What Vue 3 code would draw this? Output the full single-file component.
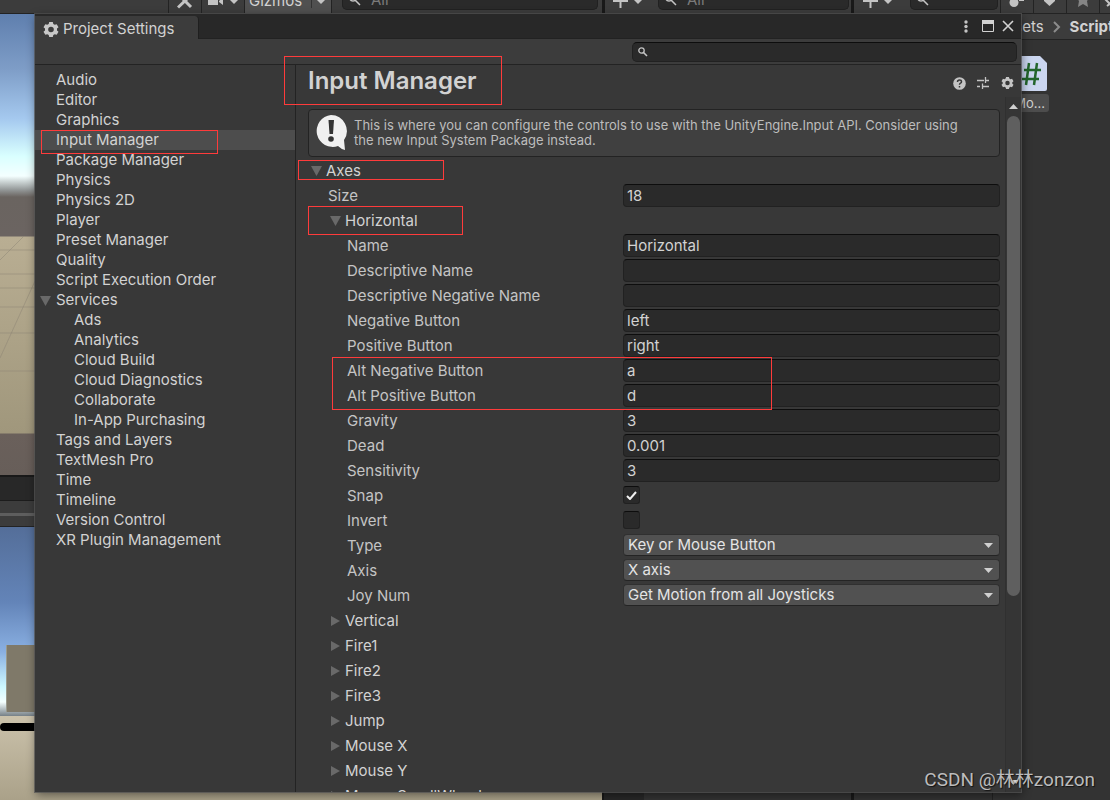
<script setup>
import { ref } from 'vue'

const sections = [
  { name: 'Audio' }, { name: 'Editor' }, { name: 'Graphics' },
  { name: 'Input Manager', active: true }, { name: 'Package Manager' },
  { name: 'Physics' }, { name: 'Physics 2D' }, { name: 'Player' },
  { name: 'Preset Manager' }, { name: 'Quality' }, { name: 'Script Execution Order' },
  { name: 'Services', open: true },
  { name: 'Ads', child: true }, { name: 'Analytics', child: true },
  { name: 'Cloud Build', child: true }, { name: 'Cloud Diagnostics', child: true },
  { name: 'Collaborate', child: true }, { name: 'In-App Purchasing', child: true },
  { name: 'Tags and Layers' }, { name: 'TextMesh Pro' }, { name: 'Time' },
  { name: 'Timeline' }, { name: 'Version Control' }, { name: 'XR Plugin Management' },
]

const fields = ref([
  { id: 'name', label: 'Name', kind: 'text', value: 'Horizontal' },
  { id: 'desc', label: 'Descriptive Name', kind: 'text', value: '' },
  { id: 'desc-neg', label: 'Descriptive Negative Name', kind: 'text', value: '' },
  { id: 'neg', label: 'Negative Button', kind: 'text', value: 'left' },
  { id: 'pos', label: 'Positive Button', kind: 'text', value: 'right' },
  { id: 'alt-neg', label: 'Alt Negative Button', kind: 'text', value: 'a' },
  { id: 'alt-pos', label: 'Alt Positive Button', kind: 'text', value: 'd' },
  { id: 'gravity', label: 'Gravity', kind: 'text', value: '3' },
  { id: 'dead', label: 'Dead', kind: 'text', value: '0.001' },
  { id: 'sensitivity', label: 'Sensitivity', kind: 'text', value: '3' },
  { id: 'snap', label: 'Snap', kind: 'check', value: true },
  { id: 'invert', label: 'Invert', kind: 'check', value: false },
  { id: 'type', label: 'Type', kind: 'select', value: 'Key or Mouse Button' },
  { id: 'axis', label: 'Axis', kind: 'select', value: 'X axis' },
  { id: 'joy', label: 'Joy Num', kind: 'select', value: 'Get Motion from all Joysticks' },
])
const size = ref('18')
const axes = ['Vertical', 'Fire1', 'Fire2', 'Fire3', 'Jump', 'Mouse X', 'Mouse Y', 'Mouse ScrollWheel']
const gear = 'M6.2 0h3.600l.5 2 1.400.8 2-.6 1.800 3-1.500 1.400v1.800l1.500 1.400-1.800 3-2-.6-1.400.8-.5 2H6.200l-.5-2-1.400-.8-2 .6-1.800-3L2 8.400V6.600L.5 5.200l1.800-3 2 .6L5.700 2zM8 4.700a2.800 2.800 0 1 0 0 5.600 2.800 2.800 0 0 0 0-5.600z'
</script>

<template>
  <div class="desktop">
    <header class="editor-bar">
      <button class="bar-cell tools" aria-label="Tools">
        <svg width="16" height="14" viewBox="0 0 16 14"><path d="M1 11.500 11 2M5 2l9 9" stroke="#c4c4c4" stroke-width="3" fill="none" /></svg>
      </button>
      <button class="bar-cell camera" aria-label="Camera">
        <svg width="32" height="14" viewBox="0 0 32 14"><path d="M1 0h10v9H1zM12 5l4-4v8l-4-3z" fill="#c4c4c4" /><path d="M23 4h8l-4 4z" fill="#c4c4c4" /></svg>
      </button>
      <button class="bar-cell gizmos"><span>Gizmos</span><i></i><svg width="8" height="4" viewBox="0 0 8 4"><path d="M0 0h8L4 4z" fill="#c4c4c4" /></svg></button>
      <label class="bar-search scene-search"><svg width="12" height="12" viewBox="0 0 12 12"><circle cx="4" cy="4" r="3" fill="none" stroke="#c4c4c4" stroke-width="1.500" /><path d="m6 6 5 5" stroke="#c4c4c4" stroke-width="1.500" /></svg><input aria-label="Search scene" placeholder="All" /></label>
      <i class="gutter"></i>
      <button class="bar-cell add" aria-label="Add object"><svg width="30" height="14" viewBox="0 0 30 14"><path d="M0 5h15M7.500 0v12" stroke="#c4c4c4" stroke-width="2" /><path d="M21 4h8l-4 4z" fill="#c4c4c4" /></svg></button>
      <label class="bar-search hierarchy-search"><svg width="12" height="12" viewBox="0 0 12 12"><circle cx="4" cy="4" r="3" fill="none" stroke="#c4c4c4" stroke-width="1.500" /><path d="m6 6 5 5" stroke="#c4c4c4" stroke-width="1.500" /></svg><input aria-label="Search hierarchy" placeholder="All" /></label>
      <i class="gutter"></i>
      <button class="bar-cell add add-asset" aria-label="Add asset"><svg width="30" height="14" viewBox="0 0 30 14"><path d="M0 5h15M7.500 0v12" stroke="#c4c4c4" stroke-width="2" /><path d="M21 4h8l-4 4z" fill="#c4c4c4" /></svg></button>
      <label class="bar-search asset-search"><svg width="12" height="12" viewBox="0 0 12 12"><circle cx="4" cy="4" r="3" fill="none" stroke="#c4c4c4" stroke-width="1.500" /><path d="m6 6 5 5" stroke="#c4c4c4" stroke-width="1.500" /></svg><input aria-label="Search assets" /></label>
      <button class="bar-cell filter" aria-label="Filter by type"><svg width="16" height="14" viewBox="0 0 16 14"><circle cx="5" cy="6.500" r="4.500" fill="#c4c4c4" /><path d="M10 1h5v4h-5z" fill="#c4c4c4" /></svg></button>
      <button class="bar-cell filter" aria-label="Filter by label"><svg width="14" height="14" viewBox="0 0 14 14"><path d="M1 0h11v5L6.500 10 1 5z" fill="#c4c4c4" /></svg></button>
      <button class="bar-cell filter" aria-label="Favorites"><svg width="14" height="14" viewBox="0 0 14 14"><path d="M0 1h14l-3 4 1 6-5-3-5 3 1-6z" fill="#858585" /></svg></button>
      <button class="bar-cell hidden-items" aria-label="Hidden items"><svg width="14" height="14" viewBox="0 0 14 14"><path d="m7 3 7 7M9 10l5-4" stroke="#c4c4c4" stroke-width="2" /></svg></button>
    </header>

    <div class="editor-body">
      <div class="viewports">
        <div class="scene-view">
          <svg width="35" height="197" viewBox="0 0 35 197"><path d="M0 14h35M0 38h35M0 52h35M0 71h35M0 97h35M0 135h35M0 24 24 0M0 122 35 45" fill="none" stroke="#8d8675" stroke-opacity=".5" /></svg>
        </div>
        <div class="game-tab"></div>
        <div class="game-tools"><i></i></div>
        <div class="game-view">
          <div class="game-sky"><i></i></div>
          <div class="game-ground"><i></i></div>
        </div>
      </div>
      <div class="hierarchy"></div>
      <div class="project">
        <div class="folders"></div>
        <div class="assets">
          <nav class="breadcrumb">
            <a href="#">Assets</a>
            <svg width="8" height="12" viewBox="0 0 8 12"><path d="m1 1 5 5-5 5" fill="none" stroke="#8c8c8c" stroke-width="2" /></svg>
            <b>Scripts</b>
          </nav>
          <figure class="asset">
            <svg width="42" height="35" viewBox="0 0 42 35"><path d="M2 0h33l7 7v26q0 2-2 2H2q-2 0-2-2V2q0-2 2-2z" fill="#cbd6f0" /><path d="M24 7 21 29M32 7l-3 22M19 14h17M17 23h17" stroke="#23652c" stroke-width="2.500" fill="none" /></svg>
            <figcaption>Mo...</figcaption>
          </figure>
        </div>
      </div>
    </div>

    <main class="window">
      <div class="titlebar">
        <div class="tab">
          <svg width="16" height="15" viewBox="0 0 16 15"><path :d="gear" fill="#c8c8c8" fill-rule="evenodd" /></svg>
          <span>Project Settings</span>
        </div>
        <div class="window-buttons">
          <button aria-label="Menu"><svg width="4" height="13" viewBox="0 0 4 13"><circle cx="2" cy="2" r="1.700" fill="#c4c4c4" /><circle cx="2" cy="6.500" r="1.700" fill="#c4c4c4" /><circle cx="2" cy="11" r="1.700" fill="#c4c4c4" /></svg></button>
          <button aria-label="Maximize"><svg width="12" height="12" viewBox="0 0 12 12"><path d="M.5.500h11v11H.500z" fill="none" stroke="#d2d2d2" /><path d="M0 0h12v4H0z" fill="#d2d2d2" /></svg></button>
          <button aria-label="Close"><svg width="12" height="12" viewBox="0 0 12 12"><path d="m1 1 10 10M11 1 1 11" stroke="#d2d2d2" stroke-width="1.600" /></svg></button>
        </div>
      </div>

      <div class="search-row">
        <label class="settings-search">
          <svg width="10" height="10" viewBox="0 0 10 10"><circle cx="3.500" cy="3.500" r="2.700" fill="none" stroke="#c4c4c4" stroke-width="1.300" /><path d="m5.500 5.500 3.500 3.500" stroke="#c4c4c4" stroke-width="1.600" /></svg>
          <input type="text" aria-label="Search settings" />
        </label>
      </div>

      <div class="columns">
        <nav class="sidebar">
          <a v-for="s in sections" :key="s.name" href="#" :class="{ active: s.active, child: s.child }">
            <svg v-if="s.open" class="fold" width="11" height="10" viewBox="0 0 11 10"><path d="M0 0h11L5.500 10z" fill="#696969" /></svg>{{ s.name }}
          </a>
        </nav>

        <section class="content">
          <div class="heading">
            <h1>Input Manager</h1>
            <div class="heading-buttons">
              <button aria-label="Help"><svg width="13" height="13" viewBox="0 0 13 13"><circle cx="6.500" cy="6.500" r="6.300" fill="#c4c4c4" /><path d="M4.500 5q0-2 2-2t2 1.700q0 1-1 1.500t-1 1.500M6.500 9v1.600" fill="none" stroke="#383838" stroke-width="1.500" /></svg></button>
              <button aria-label="Presets"><svg width="13" height="12" viewBox="0 0 13 12"><path d="M0 3.500h7M8.500 0v6M8.500 3.500H12M0 9.500h3M5.500 9.500H12M5.500 6.500V12" fill="none" stroke="#c4c4c4" stroke-width="1.300" /></svg></button>
              <button aria-label="Settings"><svg width="13" height="12" viewBox="0 0 16 15"><path :d="gear" fill="#c4c4c4" fill-rule="evenodd" /></svg></button>
            </div>
          </div>

          <div class="scroll-area">
            <div class="form">
              <div class="help">
                <svg width="33" height="36" viewBox="0 0 33 36"><path d="M16 0a16 16 0 1 0 7 31q3 3 7 4l-1-10A16 16 0 0 0 16 0z" fill="#f0f0f0" /><path d="M13.500 5h5.500l-1 14h-3.500z" fill="#333" /><circle cx="16" cy="24" r="2.800" fill="#333" /></svg>
                <p>This is where you can configure the controls to use with the UnityEngine.Input API. Consider using the new Input System Package instead.</p>
              </div>

              <button class="fold-row level-0"><svg width="11" height="10" viewBox="0 0 11 10"><path d="M0 0h11L5.500 10z" fill="#696969" /></svg>Axes</button>
              <div class="row size-row">
                <label for="size">Size</label>
                <input id="size" v-model="size" class="text-field" type="text" />
              </div>
              <button class="fold-row"><svg width="11" height="10" viewBox="0 0 11 10"><path d="M0 0h11L5.500 10z" fill="#696969" /></svg>Horizontal</button>
              <div v-for="f in fields" :key="f.id" class="row">
                <label :for="f.id">{{ f.label }}</label>
                <input v-if="f.kind === 'text'" :id="f.id" v-model="f.value" class="text-field" type="text" />
                <span v-else-if="f.kind === 'check'" class="check">
                  <input :id="f.id" v-model="f.value" type="checkbox" />
                  <svg v-if="f.value" width="11" height="9" viewBox="0 0 11 9"><path d="m1 5 3 3 6-7" fill="none" stroke="#f0f0f0" stroke-width="2" /></svg>
                </span>
                <span v-else class="drop">
                  <select :id="f.id" v-model="f.value"><option>{{ f.value }}</option></select>
                  <svg width="9" height="5" viewBox="0 0 9 5"><path d="M0 0h9L4.500 5z" fill="#d0d0d0" /></svg>
                </span>
              </div>
              <button v-for="a in axes" :key="a" class="fold-row"><svg width="11" height="10" viewBox="0 0 11 10"><path d="M1 0v10l9-5z" fill="#696969" /></svg>{{ a }}</button>
            </div>
            <div class="scrollbar">
              <svg width="9" height="5" viewBox="0 0 9 5"><path d="M0 5h9L4.500 0z" fill="#d0d0d0" /></svg>
              <div class="track"><i></i></div>
              <svg width="9" height="5" viewBox="0 0 9 5"><path d="M0 0h9L4.500 5z" fill="#d0d0d0" /></svg>
            </div>
          </div>
        </section>
      </div>

      <i class="mark mark-title"></i>
      <i class="mark mark-section"></i>
      <i class="mark mark-axes"></i>
      <i class="mark mark-horizontal"></i>
      <i class="mark mark-alt"></i>
    </main>

    <div class="watermark">CSDN @林林zonzon</div>
  </div>
</template>

<style>
html, body, #app { height: 100%; }
body { margin: 0; background: #333; }
</style>

<style scoped>
* { box-sizing: border-box; }
button, input, select { font: inherit; color: inherit; border: 0; margin: 0; padding: 0; background: none; outline: 0; min-width: 0; }
a { color: inherit; text-decoration: none; }
svg { display: block; flex: none; }

.desktop { position: relative; height: 100%; min-height: 100vh; overflow: hidden; display: flex; flex-direction: column; background: #333; color: #d2d2d2; font: 15px/20px Inter, sans-serif; }

.editor-bar { flex: none; display: flex; height: 14px; overflow: hidden; padding-left: 168px; background: #3c3c3c; border-bottom: 1px solid #232323; }
.bar-cell { flex: none; display: flex; height: 13px; justify-content: center; align-items: flex-start; border-left: 1px solid #232323; overflow: hidden; }
.bar-cell svg { margin-top: -4px; }
.tools { width: 33px; }
.camera { width: 43px; }
.gizmos { width: 88px; align-items: center; justify-content: space-between; padding: 0 6px 0 4px; background: #505050; border-right: 1px solid #232323; }
.gizmos span { line-height: 20px; margin-top: -11px; }
.gizmos i { width: 1px; height: 8px; margin: -5px 0 0 4px; background: #333; }
.gizmos svg { margin-top: -10px; }
.bar-search { flex: none; display: flex; gap: 10px; height: 10px; padding-left: 6px; background: #2a2a2a; border: 1px solid #212121; border-top: 0; border-radius: 0 0 5px 5px; color: #808080; overflow: hidden; }
.bar-search svg { margin-top: -6px; }
.bar-search input { height: 20px; margin-top: -10px; width: 100%; }
.bar-search input::placeholder { color: #7a7a7a; }
.scene-search { width: 256px; margin: 0 4px 0 10px; }
.hierarchy-search { width: 191px; margin-right: 2px; }
.asset-search { width: 88px; margin-right: 2px; }
.gutter { flex: none; width: 3px; background: #191919; }
.add { width: 53px; border: 0; padding-right: 8px; }
.add-asset { width: 56px; }
.filter { width: 33px; }
.hidden-items { flex: 1; }

.editor-body { flex: 1; min-height: 0; display: flex; }
.viewports { flex: none; width: 602px; display: flex; flex-direction: column; }
.scene-view { flex: none; height: 463px; padding-top: 222px; border-bottom: 2px solid #191919; background: linear-gradient(#5f7fae 0, #7e9dc7 55px, #a5c9ef 105px, #d9ffff 142px, #f4ffff 162px, #929696 176px, #6a6460 183px, #6b6461 222px, #b9ae93 223px, #a0977c 419px, #6a605b 420px, #675e59 461px); }
.game-tab { flex: none; height: 24px; background: #282828; border-bottom: 1px solid #1c1c1c; }
.game-tools { flex: none; height: 26px; padding-top: 12px; background: #3c3c3c; border-bottom: 1px solid #232323; }
.game-tools i { display: block; height: 3px; background: #5e5e5e; }
.game-view { flex: 1; display: flex; flex-direction: column; }
.game-sky { height: 189px; padding: 118px 0 4px 6px; background: linear-gradient(#546e99, #6384b8 75px, #8ab0e2 125px, #cdf8ff 160px, #f4ffff 175px, #768087 189px); }
.game-sky i { display: block; height: 67px; background: #7f7969; border-left: 1px solid #9a9a8c; }
.game-ground { flex: 1; padding-top: 7px; background: linear-gradient(#cbc2ab, #aaa189); }
.game-ground i { display: block; height: 8px; background: #000; border-radius: 4px; }
.hierarchy { flex: none; width: 252px; background: #333; border-left: 2px solid #191919; border-right: 3px solid #191919; box-shadow: inset 40px 0 #282828; }
.project { flex: 1; min-width: 0; display: flex; }
.folders { flex: none; width: 139px; border-right: 1px solid #232323; }
.assets { flex: 1; min-width: 0; overflow: hidden; }
.breadcrumb { display: flex; align-items: center; height: 26px; gap: 9px; padding: 0 0 0 3px; background: #3c3c3c; border-bottom: 1px solid #232323; white-space: nowrap; }
.asset { display: flex; flex-direction: column; align-items: flex-end; width: 56px; margin: 16px 0 0; gap: 3px; font-size: 13px; line-height: 18px; }
.asset > svg { margin-right: 2px; }
.asset figcaption { padding: 0 4px; background: #4d4d4d; border-radius: 3px; }

.window { position: absolute; inset: 14px 89px 8px 35px; display: flex; flex-direction: column; background: #383838; box-shadow: 0 0 0 1px #555b, 1px 3px 9px #0007; }
.titlebar { flex: none; display: flex; justify-content: space-between; height: 25px; background: #282828; border-bottom: 1px solid #222; padding-top: 2px; }
.tab { display: flex; align-items: center; gap: 4px; height: 24px; width: 164px; padding: 2px 8px 0; background: #3c3c3c; border-right: 1px solid #1f1f1f; border-radius: 0 4px 0 0; white-space: nowrap; }
.window-buttons { display: flex; align-items: center; gap: 8px; padding: 0 7px 2px 0; }
.window-buttons button:first-child { margin-right: 6px; }
.search-row { flex: none; display: flex; justify-content: flex-end; height: 26px; padding: 3px 4px; background: #3c3c3c; border-bottom: 1px solid #232323; }
.settings-search { display: flex; align-items: center; gap: 5px; width: 385px; height: 20px; padding: 0 5px; background: #2a2a2a; border: 1px solid #212121; border-top-color: #0d0d0d; border-radius: 5px; }
.settings-search input { flex: 1; }

.columns { flex: 1; min-height: 0; display: flex; }
.sidebar { flex: none; width: 261px; padding-top: 5px; border-right: 1px solid #232323; overflow: hidden; }
.sidebar a { display: block; position: relative; height: 20px; padding-left: 21px; white-space: nowrap; }
.sidebar a.child { padding-left: 39px; }
.sidebar a.active { background: #4d4d4d; }
.fold { position: absolute; left: 5px; top: 6px; }

.content { flex: 1; min-width: 0; display: flex; flex-direction: column; }
.heading { flex: none; display: flex; justify-content: space-between; height: 32px; padding: 0 7px 0 12px; }
.heading h1 { margin: 0; font-size: 24px; line-height: 32px; font-weight: 600; }
.heading-buttons { display: flex; align-items: center; gap: 11px; padding-top: 4px; }
.scroll-area { flex: 1; min-height: 0; display: flex; }
.form { flex: 1; min-width: 0; overflow: hidden; padding: 12px 5px 0 12px; }
.help { display: flex; gap: 6px; height: 48px; margin-bottom: 1px; padding: 5px 20px 5px 6px; background: #404040; border: 1px solid #232323; border-radius: 4px; color: #bdbdbd; font-size: 13px; line-height: 15px; }
.help p { margin: 3px 0 0; }
.row { display: grid; grid-template-columns: 315px minmax(0, 1fr); align-items: center; height: 25px; color: #c4c4c4; }
.row label { padding-left: 39px; white-space: nowrap; }
.size-row label { padding-left: 20px; }
.fold-row { display: flex; align-items: center; gap: 4px; width: 100%; height: 25px; padding-left: 22px; white-space: nowrap; }
.fold-row.level-0 { padding-left: 3px; }
.text-field { height: 23px; padding: 0 3px; background: #2a2a2a; border: 1px solid #212121; border-top-color: #0d0d0d; border-radius: 4px; color: #d2d2d2; }
.check { position: relative; width: 17px; height: 20px; }
.check input { appearance: none; display: block; width: 17px; height: 18px; background: #2a2a2a; border: 1px solid #212121; border-top-color: #0d0d0d; border-radius: 3px; }
.check svg { position: absolute; left: 3px; top: 5px; pointer-events: none; }
.drop { position: relative; height: 23px; }
.drop select { appearance: none; display: block; width: 100%; height: 22px; padding: 0 24px 0 4px; background: #515151; border: 1px solid #303030; border-bottom-color: #242424; border-radius: 4px; color: #e4e4e4; }
.drop svg { position: absolute; right: 7px; top: 9px; pointer-events: none; }
.scrollbar { flex: none; width: 16px; display: flex; flex-direction: column; align-items: center; justify-content: space-between; padding: 7px 1px; background: #353535; border-left: 1px solid #303030; }
.track { flex: 1; width: 13px; margin: 7px 0; }
.track i { display: block; height: 73%; background: #5f5f5f; border-radius: 7px; }

.mark { position: absolute; border: 1px solid #ff3b3b; pointer-events: none; }
.mark-title { left: 249px; top: 42px; width: 218px; height: 49px; }
.mark-section { left: 6px; top: 116px; width: 177px; height: 24px; }
.mark-axes { left: 263px; top: 146px; width: 146px; height: 20px; }
.mark-horizontal { left: 273px; top: 192px; width: 155px; height: 29px; }
.mark-alt { left: 297px; top: 343px; width: 440px; height: 53px; }

.watermark { position: absolute; right: 15px; bottom: 8px; font: 19px/24px Roboto, "Noto Sans CJK SC", sans-serif; color: #bcbcbc; text-shadow: 1px 1px 1px #000a; white-space: nowrap; }
</style>
